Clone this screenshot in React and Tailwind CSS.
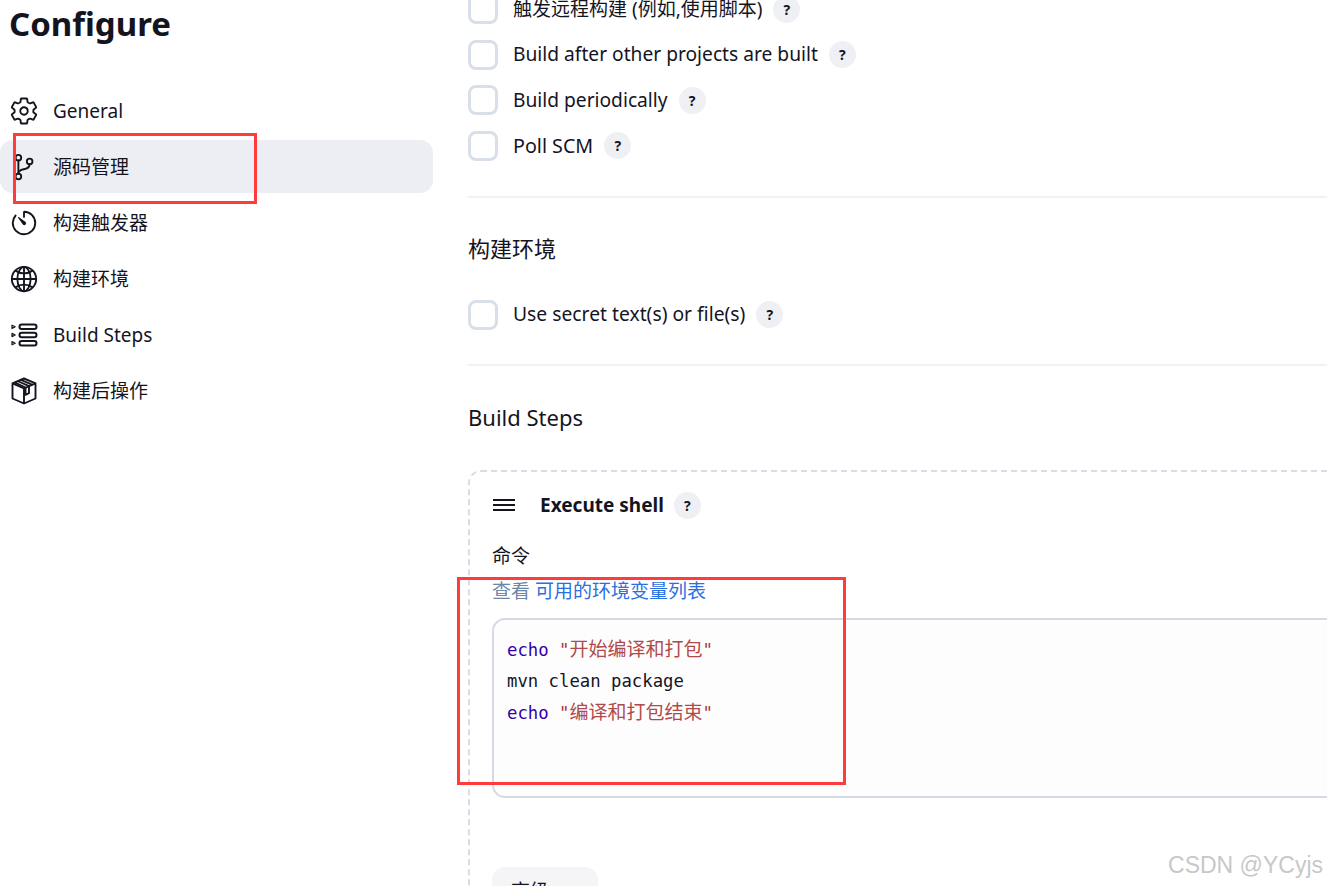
import {
  IoSettingsOutline,
  IoGitBranchOutline,
  IoTimerOutline,
  IoGlobeOutline,
} from 'react-icons/io5';

const font = { fontFamily: '"Noto Sans", "Noto Sans CJK SC", sans-serif' };

function StepsIcon() {
  return (
    <svg viewBox="0 0 28 28" className="w-[28px] h-[28px]" fill="none" stroke="currentColor" strokeWidth="2">
      <rect x="9.5" y="3.5" width="17" height="4.5" rx="2.2" />
      <rect x="9.5" y="11.8" width="17" height="4.5" rx="2.2" />
      <rect x="9.5" y="20" width="17" height="4.5" rx="2.2" />
      <path strokeWidth="1.2" strokeLinejoin="round" d="M2 4.2l3.2 1.6-3.2 1.6zM2 12.4l3.2 1.6-3.2 1.6zM2 20.6l3.2 1.6-3.2 1.6z" />
    </svg>
  );
}

function PackageIcon() {
  return (
    <svg viewBox="0 0 28 28" className="w-[28px] h-[28px]" fill="none" stroke="currentColor" strokeWidth="1.9" strokeLinejoin="round">
      <path d="M14 1.5l11.5 4.8v15.2L14 26.5 2.5 21.5V6.3z" />
      <path d="M2.5 6.3L14 11.5l11.5-5.2M14 11.5v15" />
      <path d="M7.5 4l11.5 5.2v7l-3.5 1.6v-7.2L4.5 5.4M11 2.8l11.5 5" />
    </svg>
  );
}

function MenuItem({ icon, label, active }) {
  return (
    <div className={`flex items-center h-[53px] pl-[10px] rounded-[13px] ${active ? 'bg-[#edeef3]' : ''}`}>
      <span className="w-[28px] h-[28px] flex items-center justify-center text-[#14141f] text-[30px] [&>svg]:shrink-0">{icon}</span>
      <span className="ml-[15px] pt-[2px] text-[19px] text-[#14141f]">{label}</span>
    </div>
  );
}

function Help({ className = 'ml-[11px]' }) {
  return (
    <span className={`${className} w-[27px] h-[27px] rounded-full bg-[#eff0f4] flex items-center justify-center text-[14px] font-bold text-[#14141f]`}>
      ?
    </span>
  );
}

function CheckRow({ label, size = 'text-[19.2px]', className = '' }) {
  return (
    <div className={`flex items-center h-[30px] ${size} ${className}`}>
      <span className="w-[30px] h-[30px] rounded-[8px] border-[3px] border-[#d9dfe8] bg-white" />
      <span className="ml-[15px] text-[#14141f]">{label}</span>
      <Help />
    </div>
  );
}

function Code({ children }) {
  return <span className="text-[19px] text-[#b04a4a]" style={font}>{children}</span>;
}

export default function App() {
  return (
    <div className="relative flex w-[1327px] h-[886px] overflow-hidden bg-white" style={font}>
      <aside className="w-[433px] shrink-0">
        <h1 className="pl-[9px] text-[33px] leading-[48px] font-bold text-[#14141f]">Configure</h1>
        <nav className="mt-[36px] flex flex-col gap-[3px]">
          <MenuItem icon={<IoSettingsOutline />} label="General" />
          <MenuItem icon={<IoGitBranchOutline />} label="源码管理" active />
          <MenuItem icon={<IoTimerOutline />} label="构建触发器" />
          <MenuItem icon={<IoGlobeOutline />} label="构建环境" />
          <MenuItem icon={<StepsIcon />} label="Build Steps" />
          <MenuItem icon={<PackageIcon />} label="构建后操作" />
        </nav>
      </aside>

      <main className="ml-[35px] flex-1 min-w-0">
        <div className="-mt-[6px] flex flex-col gap-[15.5px]">
          <CheckRow label="触发远程构建 (例如,使用脚本)" size="text-[19px]" />
          <CheckRow label="Build after other projects are built" />
          <CheckRow label="Build periodically" />
          <CheckRow label="Poll SCM" size="text-[19.7px]" />
        </div>
        <div className="mt-[35px] h-[2px] bg-[#f1f2f5]" />
        <h2 className="mt-[35px] text-[22px] leading-[30px] text-[#14141f]">构建环境</h2>
        <CheckRow label="Use secret text(s) or file(s)" size="text-[19.3px]" className="mt-[37px]" />
        <div className="mt-[34px] h-[2px] bg-[#f1f2f5]" />
        <h2 className="mt-[36px] text-[22px] leading-[30px] text-[#14141f]">Build Steps</h2>

        <section className="mt-[38px] w-[900px] h-[520px] rounded-[13px] border-2 border-dashed border-[#d8dce6] pl-[22px] pt-[20px]">
          <div className="flex items-center h-[27px]">
            <svg viewBox="0 0 22 14" className="ml-[1px] w-[22px] h-[14px]" fill="none" stroke="#14141f" strokeWidth="2">
              <path d="M0 2h22M0 7h22M0 12h22" />
            </svg>
            <span className="ml-[25px] text-[19px] font-bold text-[#14141f]">Execute shell</span>
            <Help className="ml-[10px]" />
          </div>
          <div className="mt-[24px] text-[19px] leading-[26px] text-[#14141f]">命令</div>
          <div className="mt-[9px] text-[19px] leading-[26px] text-[#6c86a8]">
            查看 <span className="text-[#2b6fe0]">可用的环境变量列表</span>
          </div>
          <div
            className="mt-[14px] h-[180px] rounded-[13px] border-2 border-[#d5dae5] bg-[#fdfdfe] pl-[13px] pt-[14px] text-[17.3px] leading-[31.3px] whitespace-pre text-[#14141f]"
            style={{ fontFamily: '"DejaVu Sans Mono", "Noto Sans CJK SC", monospace' }}
          >
            <div>
              <span className="text-[#3300aa]">echo</span> <span className="text-[#aa3333]">"<Code>开始编译和打包</Code>"</span>
            </div>
            <div>mvn clean package</div>
            <div>
              <span className="text-[#3300aa]">echo</span> <span className="text-[#aa3333]">"<Code>编译和打包结束</Code>"</span>
            </div>
          </div>
          <div className="mt-[69px] w-[106px] h-[50px] rounded-[13px] bg-[#f5f5f7] pl-[19px] pt-[10px] text-[19px] text-[#14141f]">高级</div>
        </section>
      </main>

      <div className="absolute left-[13px] top-[133px] w-[244px] h-[71px] border-[3px] border-[#ff3b3b]" />
      <div className="absolute left-[457px] top-[577px] w-[389px] h-[208px] border-[3px] border-[#ff3b3b]" />
      <div
        className="absolute right-[4px] top-[848px] text-[23px] text-[#c8c8c8]"
        style={{ fontFamily: '"Liberation Sans", sans-serif' }}
      >
        CSDN @YCyjs
      </div>
    </div>
  );
}
